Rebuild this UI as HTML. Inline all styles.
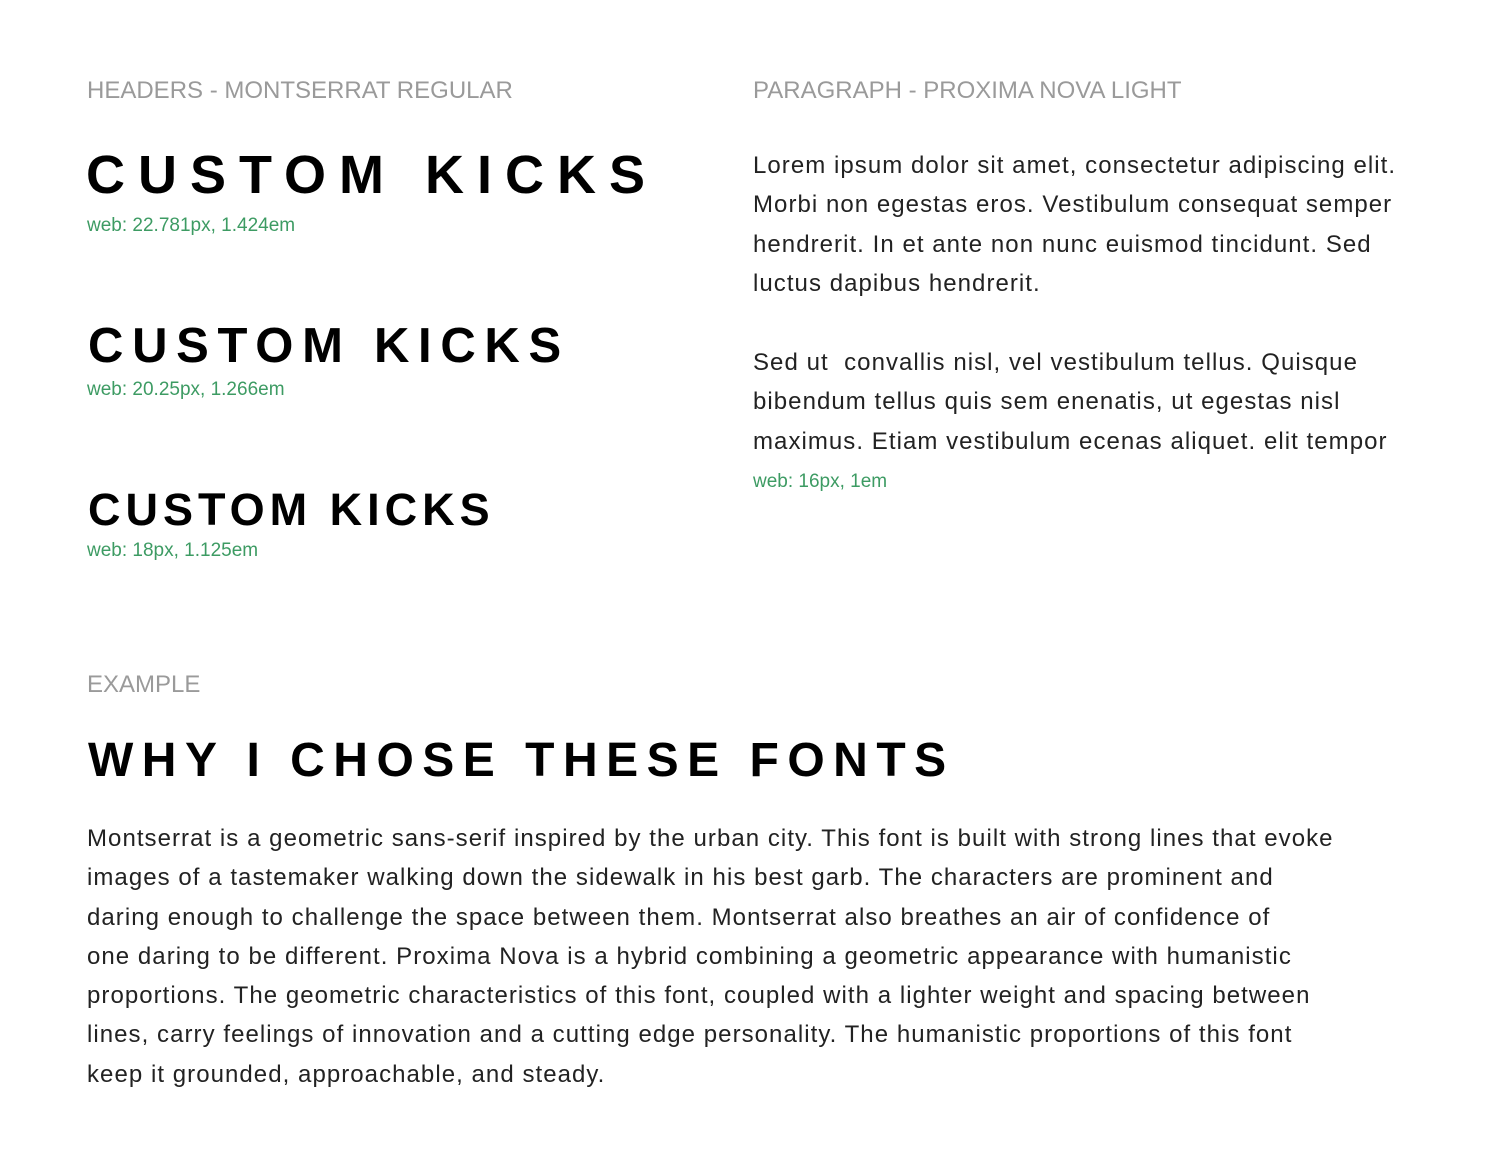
<!DOCTYPE html>
<html><head><meta charset="utf-8"><style>
body{margin:0;width:1500px;height:1158px;background:#fff;position:relative;overflow:hidden;font-family:"Liberation Sans",sans-serif}
div{position:absolute;white-space:nowrap;line-height:1}
.lab{font-size:24px;color:#9a9a9a;font-weight:300}
.h{font-weight:bold;color:#000}
.g{font-size:19px;color:#3d9b63}
.p{font-size:24px;line-height:39.3px;color:#222;letter-spacing:1.05px}
</style></head><body>
<div class="lab" style="left:87px;top:79px">HEADERS - MONTSERRAT REGULAR</div>
<div class="lab" style="left:753px;top:79px">PARAGRAPH - PROXIMA NOVA LIGHT</div>
<div class="h" style="left:86px;top:148px;font-size:54px;letter-spacing:13px">CUSTOM KICKS</div>
<div class="g" style="left:87px;top:216px">web: 22.781px, 1.424em</div>
<div class="h" style="left:88px;top:322px;font-size:49px;letter-spacing:8.7px">CUSTOM KICKS</div>
<div class="g" style="left:87px;top:380px">web: 20.25px, 1.266em</div>
<div class="h" style="left:88px;top:487px;font-size:45px;letter-spacing:5px">CUSTOM KICKS</div>
<div class="g" style="left:87px;top:541px">web: 18px, 1.125em</div>
<div class="p" style="left:753px;top:146px">Lorem ipsum dolor sit amet, consectetur adipiscing elit.<br>Morbi non egestas eros. Vestibulum consequat semper<br>hendrerit. In et ante non nunc euismod tincidunt. Sed<br>luctus dapibus hendrerit.</div>
<div class="p" style="left:753px;top:343px">Sed ut &nbsp;convallis nisl, vel vestibulum tellus. Quisque<br>bibendum tellus quis sem enenatis, ut egestas nisl<br>maximus. Etiam vestibulum ecenas aliquet. elit tempor</div>
<div class="g" style="left:753px;top:472px">web: 16px, 1em</div>
<div class="lab" style="left:87px;top:673px">EXAMPLE</div>
<div class="h" style="left:88px;top:737px;font-size:48px;letter-spacing:8.5px">WHY I CHOSE THESE FONTS</div>
<div class="p" style="left:87px;top:819px">Montserrat is a geometric sans-serif inspired by the urban city. This font is built with strong lines that evoke<br>images of a tastemaker walking down the sidewalk in his best garb. The characters are prominent and<br>daring enough to challenge the space between them. Montserrat also breathes an air of confidence of<br>one daring to be different. Proxima Nova is a hybrid combining a geometric appearance with humanistic<br>proportions. The geometric characteristics of this font, coupled with a lighter weight and spacing between<br>lines, carry feelings of innovation and a cutting edge personality. The humanistic proportions of this font<br>keep it grounded, approachable, and steady.</div>
</body></html>
